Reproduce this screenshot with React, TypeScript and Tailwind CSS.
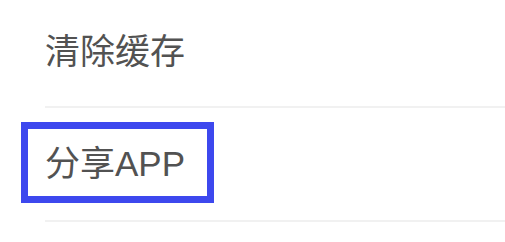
import React from 'react';

const font = { fontFamily: '"Liberation Sans", "Noto Sans CJK SC", sans-serif' };

function Row({ label, highlight = false, height }: { label: string; highlight?: boolean; height: string }) {
  return (
    <div className={`relative flex items-center pl-[45px] ${height}`}>
      <span className="text-[35px] leading-none text-[#525252]" style={font}>
        {label}
      </span>
      {highlight && (
        <div className="absolute left-[21px] top-[14px] h-[81px] w-[193px] border-[7px] border-[#3d48ee]" />
      )}
    </div>
  );
}

export default function App() {
  return (
    <div className="h-[242px] w-[505px] overflow-hidden bg-white">
      <Row label="清除缓存" height="h-[106px] pb-[4px]" />
      <div className="ml-[45px] h-[2px] bg-[#f1f1f1]" />
      <Row label="分享APP" highlight height="h-[112px] pb-[2px]" />
      <div className="ml-[45px] h-[2px] bg-[#f1f1f1]" />
    </div>
  );
}
